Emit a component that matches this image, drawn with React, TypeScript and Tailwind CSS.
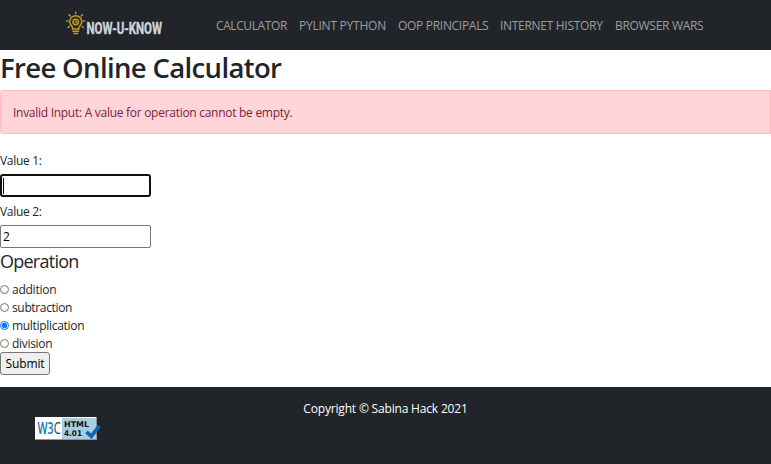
import { useState } from "react";

const links = [
  { label: "CALCULATOR", style: "w-[71px] tracking-[-0.4px]" },
  { label: "PYLINT PYTHON", style: "w-[87px] tracking-[-0.24px]" },
  { label: "OOP PRINCIPALS", style: "w-[90px] tracking-[-0.3px]" },
  { label: "INTERNET HISTORY", style: "w-[103px] tracking-[-0.3px]" },
  { label: "BROWSER WARS", style: "w-[89px] tracking-[-0.3px]" },
];

const operations = [
  { label: "addition", style: "tracking-[-0.25px]" },
  { label: "subtraction", style: "tracking-[-0.35px]" },
  { label: "multiplication", style: "tracking-[-0.3px]" },
  { label: "division", style: "tracking-[-0.3px]" },
];

function Logo() {
  return (
    <svg className="ml-[63px] h-10 w-[102px] shrink-0 overflow-visible" viewBox="63 5 102 40" role="img" aria-label="Now-U-Know">
      <g fill="none" stroke="#c59a20" strokeWidth="1.5" strokeLinecap="round">
        <path d="M72.500 29v-1.300c0-1.600-2.900-2.700-2.900-6a6.100 5.900 0 0 1 12.200 0c0 3.300-2.900 4.400-2.900 6v1.300z" />
        <circle cx="75.700" cy="22" r="2.700" />
        <path d="M75.200 21.300h1.500M75.200 22.800h1.500" strokeWidth="1" />
        <path d="M73 31.300h5.500M74 33.500h3.500" strokeWidth="1.600" />
        <path d="M75.700 12.300v1.300M69 14.700l1.200 1.300M82.400 14.700l-1.200 1.300M66.700 21h1.200M83.500 21h1.300M68 27.500l1.200-1M83.300 27.500l-1.200-1" />
      </g>
      <text x="86.500" y="33.500" textLength="75.500" lengthAdjust="spacingAndGlyphs" fill="#ced4df" stroke="#ced4df" strokeWidth="0.400" fontFamily="Roboto, Liberation Sans, sans-serif" fontSize="16.500" fontWeight="700">
        NOW-U-KNOW
      </text>
    </svg>
  );
}

function ValidatorBadge() {
  return (
    <svg className="ml-[35px] block h-6 w-[68px]" viewBox="0 0 68 24" role="img" aria-label="W3C HTML 4.01">
      <path d="M0 0h62v23H0z" fill="#8e9499" />
      <path d="M0 0h61v22H0z" fill="#fff" />
      <path d="M27 1h34v21H27z" fill="#a9cee2" />
      <g fontFamily="Open Sans, sans-serif">
        <text x="2.500" y="17" fontSize="16" fontWeight="600" fill="#0877b9" textLength="16" lengthAdjust="spacingAndGlyphs">W3</text>
        <text x="18.800" y="17" fontSize="16" fill="#333" textLength="7" lengthAdjust="spacingAndGlyphs">C</text>
      </g>
      <g fontFamily="DejaVu Sans, sans-serif" fontSize="7.800" fontWeight="700" fill="#111">
        <text x="29" y="9.500" textLength="25" lengthAdjust="spacingAndGlyphs">HTML</text>
        <text x="29" y="18.500" textLength="18" lengthAdjust="spacingAndGlyphs">4.01</text>
      </g>
      <path d="M51.500 14.800l4.800 4.500 8-10.300" fill="none" stroke="#0869ad" strokeWidth="3.800" />
    </svg>
  );
}

export default function App() {
  const [selected, setSelected] = useState("multiplication");
  const [first, setFirst] = useState("");
  const [second, setSecond] = useState("2");

  return (
    <div className="flex h-[464px] flex-col overflow-hidden bg-white font-['Open_Sans','Noto_Sans',sans-serif] text-[12px] leading-[18px] text-[#212529]">
      <nav className="flex h-[50px] shrink-0 items-center bg-[#212529]">
        <Logo />
        <div className="ml-[51px] flex gap-3 pt-[2px]">
          {links.map(({ label, style }) => (
            <a key={label} href="#" className={`block whitespace-nowrap text-[#9b9d9f] ${style}`}>{label}</a>
          ))}
        </div>
      </nav>

      <main className="h-[337px] shrink-0">
        <h1 className="h-10 whitespace-nowrap text-[27.5px] leading-[36px] font-semibold tracking-[-0.65px]">Free Online Calculator</h1>
        <div role="alert" className="flex h-11 items-center rounded-l-[3px] border border-[#ffb8c1] bg-[#ffd5d9] px-3 pt-[2px] text-[#842039]">
          <span className="whitespace-nowrap tracking-[-0.28px]">Invalid Input: A value for operation cannot be empty.</span>
        </div>

        <form className="pt-[18px]" onSubmit={(e) => e.preventDefault()}>
          <label htmlFor="first" className="block h-[22px] tracking-[-0.3px]">Value 1:</label>
          <div className="flex h-[23px] w-[151px] items-center rounded-[3px] border-2 border-[#101010] px-px">
            <span className="h-4 w-px bg-black" />
            <input id="first" value={first} onChange={(e) => setFirst(e.target.value)} className="w-full min-w-0 outline-none" />
          </div>
          <label htmlFor="second" className="mt-[6px] block h-[22px] tracking-[-0.3px]">Value 2:</label>
          <input id="second" value={second} onChange={(e) => setSecond(e.target.value)} className="block h-[23px] w-[151px] rounded-[2px] border border-[#767676] px-[2px] text-black outline-none" />
          <h2 className="h-8 pt-[2px] text-[18px] leading-[22px] tracking-[-0.75px]">Operation</h2>
          {operations.map(({ label, style }) => (
            <label key={label} className={`flex h-[18px] items-center gap-[3px] ${style}`}>
              <input
                type="radio"
                name="operation"
                checked={selected === label}
                onChange={() => setSelected(label)}
                className="h-[9px] w-[9px] accent-[#0878f9]"
              />
              <span className="pt-[2px]">{label}</span>
            </label>
          ))}
          <button className="block h-[23px] w-[50px] rounded-[3px] border border-[#767676] bg-[#efefef] pt-px text-center leading-[20px] tracking-[-0.15px] text-black">Submit</button>
        </form>
      </main>

      <footer className="h-[77px] shrink-0 bg-[#212529] pt-[13px] text-white">
        <p className="h-[17px] text-center tracking-[-0.18px]">Copyright © Sabina Hack 2021</p>
        <ValidatorBadge />
      </footer>
    </div>
  );
}
